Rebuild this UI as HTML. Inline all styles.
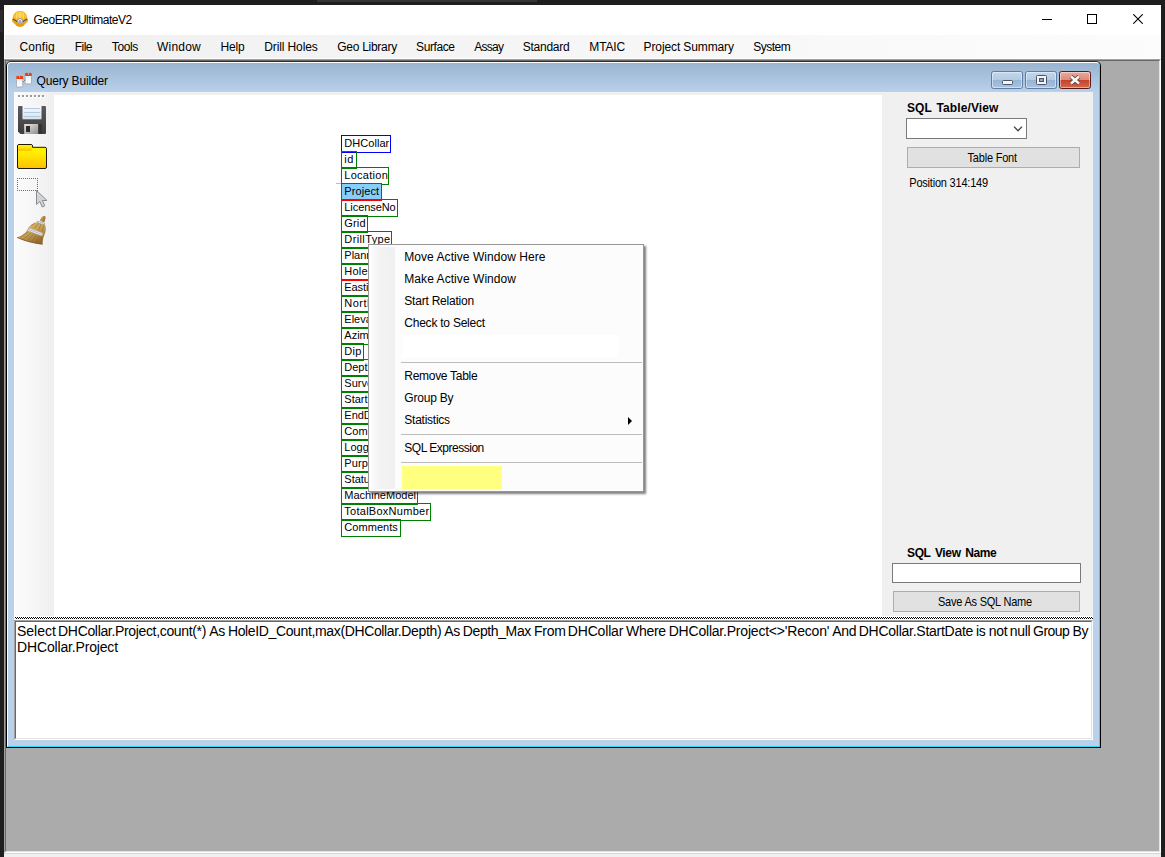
<!DOCTYPE html>
<html lang="en"><head><meta charset="utf-8"><title>GeoERPUltimateV2 - Query Builder</title>
<style>
html,body{margin:0;padding:0}
body{width:1165px;height:857px;background:#1e1e1e;position:relative;overflow:hidden;font-family:"Liberation Sans",sans-serif;font-size:12px;color:#000}
div,span,svg{position:absolute;box-sizing:border-box}
.t{white-space:nowrap;display:block}
.fb{height:18px;border:1px solid #008000}
#win{left:4px;top:5px;width:1157px;height:852px;background:#fff}
#menubar{left:4px;top:35px;width:1157px;height:24px;background:linear-gradient(90deg,#f0f0f0,#fcfcfc);border-left:1px solid #fff;border-bottom:1px solid #fff}
#mdi{left:4px;top:59px;width:1157px;height:794px;background:#ababab;border-style:solid;border-width:1px;border-color:#a0a0a0 #fff #fff #a0a0a0}
#mdi2{left:5px;top:60px;width:1155px;height:792px;border-style:solid;border-width:1px;border-color:#696969 #e3e3e3 #e3e3e3 #696969}
#status{left:4px;top:853px;width:1157px;height:4px;background:#f0f0f0;border-top:1px solid #d7d7d7}
#child{left:6px;top:61px;width:1095px;height:687px;background:#b9d1ea;border:1px solid #000;border-top-color:#2d2d2d;border-radius:5px 5px 0 0;overflow:hidden}
#chl{left:0;top:0;width:1093px;height:685px;border-style:solid;border-width:1px;border-color:#fff #2fd6f3 #2fd6f3 #fff;border-radius:4px 4px 0 0}
#cap{left:1px;top:1px;width:1091px;height:29px;background:linear-gradient(#99b4d1,#b9d1ea)}
#content{left:14px;top:92px;width:1079px;height:648px;background:#f0f0f0}
#tool{left:14px;top:92px;width:37px;height:524px;background:linear-gradient(90deg,#fcfcfc,#f0f0f0);border-radius:0 2px 0 0}
#canvas{left:54px;top:95px;width:828px;height:521px;background:#fff;overflow:hidden}
#split{left:14px;top:616px;width:1079px;height:4px;background:#fff}
#split i{position:absolute;left:1px;top:1px;width:1078px;height:2px;background:repeating-conic-gradient(#000 0% 25%,#fff 0% 50%) 1px 0/2px 2px}
#sqlbox{left:14px;top:620px;width:1079px;height:120px;background:#fff;border-style:solid;border-width:1px;border-color:#a0a0a0 #fff #fff #a0a0a0}
#sqlbox2{left:15px;top:621px;width:1077px;height:118px;border-style:solid;border-width:1px;border-color:#696969 #e3e3e3 #e3e3e3 #696969}
.btn{background:#e1e1e1;border:1px solid #adadad}
.inp{background:#fff;border:1px solid #7a7a7a}
.cb{height:18px;width:32px;top:71px;border:1px solid #5f7ea6;border-radius:2.5px;background:linear-gradient(#c3d6ec 0%,#b4cbe6 48%,#98b4d4 52%,#a9c3e0 100%);box-shadow:inset 0 0 0 1px rgba(255,255,255,.45)}
.cb.x{border-color:#5a1a16;background:linear-gradient(#eaa99b 0%,#dd8b79 48%,#c4432a 52%,#d2694e 100%)}
#ctx{left:368px;top:244px;width:276px;height:248px;background:#fcfcfc;border:1px solid #979797;box-shadow:2px 2px 2px rgba(0,0,0,.5)}
#ctx .gut{left:2px;top:2px;width:24px;height:242px;background:linear-gradient(90deg,#fbfbfb,#f3f3f3 35%,#f0f0f0)}
.sep{height:1px;background:#bdbdbd;left:401px;width:241px}

</style></head>
<body>
<div style="left:0;top:10px;width:3px;height:22px;background:#2b2b2b"></div><div style="left:317px;top:0;width:220px;height:2px;background:#353535"></div>
<div id="win"></div>
<!-- app icon: miner helmet -->
<svg style="left:12px;top:11px" width="16" height="16" viewBox="0 0 16 16">
<defs><radialGradient id="hg" cx="50%" cy="25%" r="75%"><stop offset="0" stop-color="#ffd858"/><stop offset=".55" stop-color="#fdb414"/><stop offset="1" stop-color="#f09400"/></radialGradient></defs>
<path d="M8 0C4.500 0 1.300 2.500 1.200 7 .5 7.500 0 8.500 .3 9.800c.5 1.700 2.200 2.700 3.200 3.400L5 15q3 .8 6 0l1.500-1.800c1-.7 2.700-1.700 3.200-3.400.3-1.300-.2-2.300-.9-2.800C14.700 2.500 11.500 0 8 0z" fill="url(#hg)" stroke="#e89a10" stroke-width=".5"/>
<path d="M8 .6V7M5.200 1.300Q4.300 4 4.400 7.500M10.800 1.300q.9 2.700.8 6.200" stroke="#ffe48a" stroke-width=".9" fill="none" opacity=".75"/>
<path d="M.9 8.200Q3.200 9 5.500 11M15.100 8.200Q12.800 9 10.500 11" stroke="#48587a" stroke-width="1.400" fill="none"/>
<path d="M3.500 13.200L5 15q3 .8 6 0l1.500-1.800Q8 15 3.500 13.200z" fill="#f59800"/>
<circle cx="8" cy="10.200" r="2.700" fill="#eceef2" stroke="#6c88b4" stroke-width=".7"/>
<path d="M6.600 12.200v-1.700a1.400 1.400 0 0 1 2.800 0v1.700z" fill="#a4a6ae"/>
</svg>
<!-- caption controls -->
<div style="left:1042px;top:19px;width:10px;height:1px;background:#000"></div>
<div style="left:1087px;top:14px;width:10px;height:10px;border:1px solid #000"></div>
<svg style="left:1133px;top:14px" width="10" height="10" viewBox="0 0 10 10"><path d="M.3 .3L9.700 9.700M9.700 .3L.3 9.700" stroke="#000" stroke-width="1.100" fill="none"/></svg>
<div id="menubar"></div>
<div id="mdi"></div><div id="mdi2"></div>
<div id="status"></div>
<div id="child"><div id="cap"></div><div id="chl"></div></div>
<!-- child icon -->
<svg style="left:16px;top:72px" width="16" height="16" viewBox="0 0 16 16">
<defs><linearGradient id="sh" x1="0" y1="0" x2="0" y2="1"><stop offset="0" stop-color="#e8eaea"/><stop offset="1" stop-color="#ffffff"/></linearGradient></defs>
<rect x=".4" y="4.100" width="6.400" height="10.900" rx=".8" fill="url(#sh)" stroke="#98a2ac" stroke-width=".8"/>
<path d="M.4 7.100V4.900a.8 .8 0 0 1 .8-.8h5a.8 .8 0 0 1 .8 .8v2.200z" fill="#f23c0e"/>
<rect x=".7" y="7.100" width="5.800" height=".8" fill="#d8f4f4"/>
<rect x="9.100" y="1" width="6.400" height="10.900" rx=".8" fill="url(#sh)" stroke="#98a2ac" stroke-width=".8"/>
<path d="M9.100 4V1.800a.8 .8 0 0 1 .8-.8h5a.8 .8 0 0 1 .8 .8V4z" fill="#f23c0e"/>
<rect x="9.400" y="4" width="5.800" height=".8" fill="#d8f4f4"/>
<path d="M3.500 3v2.800M12.500 0v2.800" stroke="#a4b8c4" stroke-width="1"/>
<path d="M7 9.800L8.900 7.900" stroke="#5c6c7c" stroke-width="1"/><path d="M7.200 8.200l1.200 1.200" stroke="#f0f4f8" stroke-width=".8"/>
</svg>
<!-- child caption buttons -->
<div class="cb" style="left:991px"><div style="left:10px;top:8px;width:11px;height:5px;background:#f6f6f6;border:1px solid #4a5468;border-radius:1.500px"></div></div>
<div class="cb" style="left:1025px"><div style="left:10px;top:3px;width:11px;height:10px;background:#f6f6f6;border:1px solid #4a5468;border-radius:1.500px"></div><div style="left:13px;top:6px;width:5px;height:4px;background:#8aa6ca;border:1px solid #4a5468"></div></div>
<div class="cb x" style="left:1059px"><svg style="left:8px;top:2px" width="14" height="12" viewBox="0 0 14 12"><path d="M3 2.500l8 7M11 2.500l-8 7" stroke="#4a3434" stroke-width="4.200" fill="none"/><path d="M3 2.500l8 7M11 2.500l-8 7" stroke="#f8f8f8" stroke-width="2.600" fill="none"/></svg></div>
<div id="content"></div>
<div id="tool"></div>
<!-- grip dots -->
<svg style="left:18px;top:95px" width="28" height="4" viewBox="0 0 28 4"><g fill="#fff"><rect x="1" y="1" width="2" height="2"/><rect x="5" y="1" width="2" height="2"/><rect x="9" y="1" width="2" height="2"/><rect x="13" y="1" width="2" height="2"/><rect x="17" y="1" width="2" height="2"/><rect x="21" y="1" width="2" height="2"/><rect x="25" y="1" width="2" height="2"/></g><g fill="#9a9a9a"><rect x="0" y="0" width="2" height="2"/><rect x="4" y="0" width="2" height="2"/><rect x="8" y="0" width="2" height="2"/><rect x="12" y="0" width="2" height="2"/><rect x="16" y="0" width="2" height="2"/><rect x="20" y="0" width="2" height="2"/><rect x="24" y="0" width="2" height="2"/></g></svg>
<!-- floppy -->
<svg style="left:18px;top:106px" width="28" height="28" viewBox="0 0 28 28">
<defs><linearGradient id="fl1" x1="0" y1="0" x2="0" y2="1"><stop offset="0" stop-color="#5c5a5a"/><stop offset="1" stop-color="#3e3c3c"/></linearGradient>
<linearGradient id="fl2" x1="0" y1="0" x2="0" y2="1"><stop offset="0" stop-color="#f8fbfe"/><stop offset="1" stop-color="#d4e2ee"/></linearGradient>
<linearGradient id="fl3" x1="0" y1="0" x2="1" y2="1"><stop offset="0" stop-color="#e8e8e8"/><stop offset="1" stop-color="#8e8e8e"/></linearGradient></defs>
<path d="M1 0h26a1 1 0 0 1 1 1v26a1 1 0 0 1-1 1H2.500L0 25.500V1a1 1 0 0 1 1-1z" fill="url(#fl1)"/>
<rect x="4.500" y="0" width="19" height="13.300" fill="url(#fl2)"/>
<path d="M6 2.500h16M6 6.500h16M6 10.500h16" stroke="#b4cade" stroke-width="1"/>
<rect x="6.200" y="18" width="14" height="10" fill="url(#fl3)"/>
<rect x="8" y="20" width="4" height="6" fill="#2c2a2a"/>
<rect x="20.500" y="18" width="3.500" height="10" fill="#343232"/>
</svg>
<!-- folder -->
<svg style="left:17px;top:144px" width="30" height="26" viewBox="0 0 30 26">
<defs><linearGradient id="fot" x1="0" y1="0" x2="0" y2="1"><stop offset="0" stop-color="#fff200"/><stop offset=".55" stop-color="#ffe000"/><stop offset="1" stop-color="#ffae00"/></linearGradient><linearGradient id="fo" x1="0" y1="0" x2="0" y2="1"><stop offset="0" stop-color="#fff600"/><stop offset=".35" stop-color="#ffee00"/><stop offset="1" stop-color="#ffbe00"/></linearGradient></defs>
<path d="M2 .5h12a1.500 1.500 0 0 1 1.500 1.500v1.300H28a1.500 1.500 0 0 1 1.500 1.500V23a1.500 1.500 0 0 1-1.500 1.500H2A1.500 1.500 0 0 1 .5 23V2A1.500 1.500 0 0 1 2 .5z" fill="url(#fo)" stroke="#1c1a08" stroke-width="1"/>
<rect x="1.200" y="1.200" width="13.600" height="5.400" fill="url(#fot)"/>
</svg>
<!-- select tool -->
<svg style="left:17px;top:178px" width="32" height="32" viewBox="0 0 32 32">
<path d="M0 0h1v1h-1zM0 12h1v1h-1zM2 0h1v1h-1zM2 12h1v1h-1zM4 0h1v1h-1zM4 12h1v1h-1zM6 0h1v1h-1zM6 12h1v1h-1zM8 0h1v1h-1zM8 12h1v1h-1zM10 0h1v1h-1zM10 12h1v1h-1zM12 0h1v1h-1zM12 12h1v1h-1zM14 0h1v1h-1zM14 12h1v1h-1zM16 0h1v1h-1zM16 12h1v1h-1zM18 0h1v1h-1zM18 12h1v1h-1zM20 0h1v1h-1zM20 12h1v1h-1zM0 2h1v1h-1zM20 2h1v1h-1zM0 4h1v1h-1zM20 4h1v1h-1zM0 6h1v1h-1zM20 6h1v1h-1zM0 8h1v1h-1zM20 8h1v1h-1zM0 10h1v1h-1zM20 10h1v1h-1z" fill="#6e6e6e"/>
<path d="M19.500 12.500v14l3.300-3 2.400 5.500 2.600-1.200-2.400-5.300h4.600z" fill="#d2d4d8" stroke="#8a8c90" stroke-width="1" stroke-linejoin="round"/>
</svg>
<!-- broom -->
<svg style="left:17px;top:215px" width="30" height="31" viewBox="0 0 30 31">
<defs><linearGradient id="br" x1="0" y1="0" x2=".6" y2="1"><stop offset="0" stop-color="#dcc07c"/><stop offset=".55" stop-color="#c8a258"/><stop offset="1" stop-color="#94682c"/></linearGradient></defs>
<path d="M22.800 5.500L25 2 26.500 .9 28.300 1.300 28.600 3 27.400 7.500z" fill="#a67c38"/>
<path d="M26.300 1.500l-1.800 4.700" stroke="#c8a45c" stroke-width=".9" fill="none"/>
<path d="M20 7C15 8.500 11.500 11.500 10.500 14.500 8 19 4 21 0 22.400 5 24.500 12 27.500 25.600 29.300 25.500 25 26.500 21.500 28.300 17.500 29.200 14 28.800 11 27.800 9z" fill="url(#br)"/>
<path d="M0 22.400C5 24.500 12 27.500 25.600 29.300" stroke="#6e4418" stroke-width=".9" fill="none" opacity=".8"/>
<path d="M3 22.300l8.500-5.500M6.500 24l8-6.300M10.500 25.500l6.500-6.800M14.500 26.800l5.200-7.200M18.500 28l3.800-7.600M22.300 28.800l2.200-7.800M14 10.500l4-2.500M17.500 13l4.500-5M21.500 15l3-6.500M25 16.500l1.800-6" stroke="#8e6a2e" stroke-width=".8" fill="none" opacity=".75"/>
<path d="M20.200 6.200l7.400 2-.4 1.600-6.600-1.800z" fill="#e6e6e8" stroke="#8c8e94" stroke-width=".6"/>
<path d="M12.200 13L26 18.200 24.800 21 10.800 15.800z" fill="#f0f0f2" stroke="#a4a4a8" stroke-width=".5"/>
<path d="M11.500 14.400l13.900 5.200" stroke="#a8aab0" stroke-width=".8"/>
</svg>
<div id="canvas"></div>
<div style="left:336px;top:183px;width:5px;height:1px;background:#87cefa"></div>
<div class="fb" style="left:341px;top:135px;width:50px;border-color:#0000ff;"></div>
<div class="fb" style="left:341px;top:151px;width:16px;border-color:#008000;"></div>
<div class="fb" style="left:341px;top:167px;width:48px;border-color:#008000;"></div>
<div class="fb" style="left:341px;top:183px;width:41px;border-color:#ff0000;background:#87cefa;"></div>
<div class="fb" style="left:341px;top:199px;width:57px;border-color:#008000;"></div>
<div class="fb" style="left:341px;top:215px;width:27px;border-color:#008000;"></div>
<div class="fb" style="left:341px;top:231px;width:51px;border-color:#008000;"></div>
<div class="fb" style="left:341px;top:247px;width:72px;border-color:#008000;"></div>
<div class="fb" style="left:341px;top:263px;width:40px;border-color:#ff0000;"></div>
<div class="fb" style="left:341px;top:279px;width:46px;border-color:#008000;"></div>
<div class="fb" style="left:341px;top:295px;width:52px;border-color:#008000;"></div>
<div class="fb" style="left:341px;top:311px;width:54px;border-color:#008000;"></div>
<div class="fb" style="left:341px;top:327px;width:48px;border-color:#008000;"></div>
<div class="fb" style="left:341px;top:343px;width:23px;border-color:#008000;"></div>
<div class="fb" style="left:341px;top:359px;width:37px;border-color:#008000;"></div>
<div class="fb" style="left:341px;top:375px;width:75px;border-color:#008000;"></div>
<div class="fb" style="left:341px;top:391px;width:53px;border-color:#008000;"></div>
<div class="fb" style="left:341px;top:407px;width:48px;border-color:#008000;"></div>
<div class="fb" style="left:341px;top:423px;width:52px;border-color:#008000;"></div>
<div class="fb" style="left:341px;top:439px;width:54px;border-color:#008000;"></div>
<div class="fb" style="left:341px;top:455px;width:48px;border-color:#008000;"></div>
<div class="fb" style="left:341px;top:471px;width:40px;border-color:#008000;"></div>
<div class="fb" style="left:341px;top:487px;width:77px;border-color:#008000;"></div>
<div class="fb" style="left:341px;top:503px;width:90px;border-color:#008000;"></div>
<div class="fb" style="left:341px;top:519px;width:60px;border-color:#008000;"></div>
<span class="t" id="f0" style="left:344.30px;top:137.69px;font-size:11px;line-height:1;letter-spacing:0.050px;">DHCollar</span>
<span class="t" id="f1" style="left:344.30px;top:153.69px;font-size:11px;line-height:1;letter-spacing:0.625px;">id</span>
<span class="t" id="f2" style="left:344.30px;top:169.69px;font-size:11px;line-height:1;letter-spacing:0.268px;">Location</span>
<span class="t" id="f3" style="left:344.30px;top:185.69px;font-size:11px;line-height:1;letter-spacing:0.100px;">Project</span>
<span class="t" id="f4" style="left:344.30px;top:201.69px;font-size:11px;line-height:1;letter-spacing:-0.069px;">LicenseNo</span>
<span class="t" id="f5" style="left:344.30px;top:217.69px;font-size:11px;line-height:1;letter-spacing:0.148px;">Grid</span>
<span class="t" id="f6" style="left:344.30px;top:233.69px;font-size:11px;line-height:1;letter-spacing:0.389px;">DrillType</span>
<span class="t" id="f7" style="left:344.30px;top:249.69px;font-size:11px;line-height:1;">PlannedDepth</span>
<span class="t" id="f8" style="left:344.30px;top:265.69px;font-size:11px;line-height:1;letter-spacing:0.250px;">HoleID</span>
<span class="t" id="f9" style="left:344.30px;top:281.69px;font-size:11px;line-height:1;letter-spacing:-0.100px;">Easting</span>
<span class="t" id="f10" style="left:344.30px;top:297.69px;font-size:11px;line-height:1;letter-spacing:0.500px;">Northing</span>
<span class="t" id="f11" style="left:344.30px;top:313.69px;font-size:11px;line-height:1;">Elevation</span>
<span class="t" id="f12" style="left:344.30px;top:329.69px;font-size:11px;line-height:1;">Azimuth</span>
<span class="t" id="f13" style="left:344.30px;top:345.69px;font-size:11px;line-height:1;letter-spacing:0.274px;">Dip</span>
<span class="t" id="f14" style="left:344.30px;top:361.69px;font-size:11px;line-height:1;">Depth</span>
<span class="t" id="f15" style="left:344.30px;top:377.69px;font-size:11px;line-height:1;">SurveyMethod</span>
<span class="t" id="f16" style="left:344.30px;top:393.69px;font-size:11px;line-height:1;">StartDate</span>
<span class="t" id="f17" style="left:344.30px;top:409.69px;font-size:11px;line-height:1;">EndDate</span>
<span class="t" id="f18" style="left:344.30px;top:425.69px;font-size:11px;line-height:1;letter-spacing:0.100px;">Company</span>
<span class="t" id="f19" style="left:344.30px;top:441.69px;font-size:11px;line-height:1;">LoggedBy</span>
<span class="t" id="f20" style="left:344.30px;top:457.69px;font-size:11px;line-height:1;letter-spacing:0.100px;">Purpose</span>
<span class="t" id="f21" style="left:344.30px;top:473.69px;font-size:11px;line-height:1;">Status</span>
<span class="t" id="f22" style="left:344.30px;top:489.69px;font-size:11px;line-height:1;letter-spacing:0.013px;">MachineModel</span>
<span class="t" id="f23" style="left:344.30px;top:505.69px;font-size:11px;line-height:1;letter-spacing:0.265px;">TotalBoxNumber</span>
<span class="t" id="f24" style="left:344.30px;top:521.69px;font-size:11px;line-height:1;letter-spacing:0.055px;">Comments</span>
<!-- right panel -->
<div class="inp" style="left:906px;top:118px;width:121px;height:21px"><svg style="left:106px;top:7px" width="10" height="6" viewBox="0 0 10 6"><path d="M1 .6L5 4.700 9 .6" fill="none" stroke="#404040" stroke-width="1.300"/></svg></div>
<div class="btn" style="left:907px;top:147px;width:173px;height:21px"></div>
<div class="inp" style="left:892px;top:563px;width:189px;height:20px"></div>
<div class="btn" style="left:893px;top:591px;width:187px;height:21px"></div>
<div id="split"><i></i></div>
<div id="sqlbox"></div><div id="sqlbox2"></div>
<!-- context menu -->
<div id="ctx"><div class="gut"></div></div>
<div style="left:402px;top:335px;width:216px;height:23px;background:#fff"></div>
<div class="sep" style="top:362px"></div>
<div class="sep" style="top:434px"></div>
<div class="sep" style="top:462px"></div>
<svg style="left:628px;top:417px" width="4" height="8" viewBox="0 0 4 8"><path d="M0 0l4 4-4 4z" fill="#000"/></svg>
<div style="left:402px;top:466px;width:100px;height:23px;background:#ffff80"></div>
<span class="t" id="ttl" style="left:33.50px;top:13.84px;font-size:12px;line-height:1;letter-spacing:-0.487px;">GeoERPUltimateV2</span>
<span class="t" id="m0" style="left:19.60px;top:40.84px;font-size:12px;line-height:1;letter-spacing:0.057px;">Config</span>
<span class="t" id="m1" style="left:74.70px;top:40.84px;font-size:12px;line-height:1;letter-spacing:-0.527px;">File</span>
<span class="t" id="m2" style="left:111.80px;top:40.84px;font-size:12px;line-height:1;letter-spacing:-0.403px;">Tools</span>
<span class="t" id="m3" style="left:157.00px;top:40.84px;font-size:12px;line-height:1;letter-spacing:0.220px;">Window</span>
<span class="t" id="m4" style="left:220.40px;top:40.84px;font-size:12px;line-height:1;letter-spacing:-0.139px;">Help</span>
<span class="t" id="m5" style="left:264.20px;top:40.84px;font-size:12px;line-height:1;letter-spacing:-0.104px;">Drill Holes</span>
<span class="t" id="m6" style="left:337.30px;top:40.84px;font-size:12px;line-height:1;letter-spacing:-0.286px;">Geo Library</span>
<span class="t" id="m7" style="left:416.10px;top:40.84px;font-size:12px;line-height:1;letter-spacing:-0.409px;">Surface</span>
<span class="t" id="m8" style="left:474.30px;top:40.84px;font-size:12px;line-height:1;letter-spacing:-0.731px;">Assay</span>
<span class="t" id="m9" style="left:522.70px;top:40.84px;font-size:12px;line-height:1;letter-spacing:-0.240px;">Standard</span>
<span class="t" id="m10" style="left:589.30px;top:40.84px;font-size:12px;line-height:1;letter-spacing:-0.123px;">MTAIC</span>
<span class="t" id="m11" style="left:643.60px;top:40.84px;font-size:12px;line-height:1;letter-spacing:-0.119px;">Project Summary</span>
<span class="t" id="m12" style="left:753.20px;top:40.84px;font-size:12px;line-height:1;letter-spacing:-0.476px;">System</span>
<span class="t" id="ct" style="left:36.50px;top:75.14px;font-size:12px;line-height:1;letter-spacing:-0.150px;">Query Builder</span>
<span class="t" id="l1" style="left:907.00px;top:101.84px;font-size:12px;line-height:1;font-weight:bold;letter-spacing:0.111px;word-spacing:1.2px;">SQL Table/View</span>
<span class="t" id="b1" style="left:967.50px;top:152.69px;font-size:11px;line-height:1;letter-spacing:-0.197px;transform:scaleY(1.12);transform-origin:0 84.65%;">Table Font</span>
<span class="t" id="pos" style="left:909.30px;top:177.69px;font-size:11px;line-height:1;letter-spacing:-0.210px;transform:scaleY(1.12);transform-origin:0 84.65%;">Position 314:149</span>
<span class="t" id="l2" style="left:907.00px;top:546.84px;font-size:12px;line-height:1;font-weight:bold;letter-spacing:-0.363px;word-spacing:1.6px;">SQL View Name</span>
<span class="t" id="b2" style="left:938.00px;top:596.69px;font-size:11px;line-height:1;letter-spacing:-0.221px;transform:scaleY(1.12);transform-origin:0 84.65%;">Save As SQL Name</span>
<span class="t" id="c0" style="left:404.30px;top:250.84px;font-size:12px;line-height:1;letter-spacing:0.051px;">Move Active Window Here</span>
<span class="t" id="c1" style="left:404.30px;top:272.84px;font-size:12px;line-height:1;letter-spacing:0.056px;">Make Active Window</span>
<span class="t" id="c2" style="left:404.30px;top:294.84px;font-size:12px;line-height:1;letter-spacing:-0.222px;">Start Relation</span>
<span class="t" id="c3" style="left:404.30px;top:316.84px;font-size:12px;line-height:1;letter-spacing:-0.231px;">Check to Select</span>
<span class="t" id="c4" style="left:404.30px;top:369.84px;font-size:12px;line-height:1;letter-spacing:-0.287px;">Remove Table</span>
<span class="t" id="c5" style="left:404.30px;top:391.84px;font-size:12px;line-height:1;letter-spacing:-0.200px;">Group By</span>
<span class="t" id="c6" style="left:404.30px;top:413.84px;font-size:12px;line-height:1;letter-spacing:-0.244px;">Statistics</span>
<span class="t" id="c7" style="left:404.30px;top:441.84px;font-size:12px;line-height:1;letter-spacing:-0.486px;">SQL Expression</span>
<div id="s1" style="left:0;top:0"><span class="t" id="s1w0" style="left:17.00px;top:623.55px;font-size:14px;line-height:1;letter-spacing:-0.004px;">Select</span> <span class="t" id="s1w1" style="left:58.10px;top:623.55px;font-size:14px;line-height:1;letter-spacing:-0.338px;">DHCollar.Project,count(*)</span> <span class="t" id="s1w2" style="left:209.30px;top:623.55px;font-size:14px;line-height:1;letter-spacing:-0.300px;">As</span> <span class="t" id="s1w3" style="left:227.90px;top:623.55px;font-size:14px;line-height:1;letter-spacing:-0.361px;">HoleID_Count,max(DHCollar.Depth)</span> <span class="t" id="s1w4" style="left:444.20px;top:623.55px;font-size:14px;line-height:1;letter-spacing:-0.300px;">As</span> <span class="t" id="s1w5" style="left:462.80px;top:623.55px;font-size:14px;line-height:1;letter-spacing:-0.387px;">Depth_Max</span> <span class="t" id="s1w6" style="left:534.10px;top:623.55px;font-size:14px;line-height:1;letter-spacing:-0.300px;">From</span> <span class="t" id="s1w7" style="left:567.80px;top:623.55px;font-size:14px;line-height:1;letter-spacing:-0.173px;">DHCollar</span> <span class="t" id="s1w8" style="left:626.10px;top:623.55px;font-size:14px;line-height:1;letter-spacing:-0.319px;">Where</span> <span class="t" id="s1w9" style="left:668.70px;top:623.55px;font-size:14px;line-height:1;letter-spacing:-0.206px;">DHCollar.Project&lt;&gt;'Recon'</span> <span class="t" id="s1w10" style="left:832.30px;top:623.55px;font-size:14px;line-height:1;letter-spacing:-0.300px;">And</span> <span class="t" id="s1w11" style="left:858.70px;top:623.55px;font-size:14px;line-height:1;letter-spacing:-0.254px;">DHCollar.StartDate</span> <span class="t" id="s1w12" style="left:975.90px;top:623.55px;font-size:14px;line-height:1;letter-spacing:-0.300px;">is</span> <span class="t" id="s1w13" style="left:988.80px;top:623.55px;font-size:14px;line-height:1;letter-spacing:-0.300px;">not</span> <span class="t" id="s1w14" style="left:1009.80px;top:623.55px;font-size:14px;line-height:1;letter-spacing:-0.300px;">null</span> <span class="t" id="s1w15" style="left:1033.10px;top:623.55px;font-size:14px;line-height:1;letter-spacing:-0.583px;">Group</span> <span class="t" id="s1w16" style="left:1072.50px;top:623.55px;font-size:14px;line-height:1;letter-spacing:-0.300px;">By</span></div>
<span class="t" id="s2" style="left:17.10px;top:639.55px;font-size:14px;line-height:1;letter-spacing:-0.167px;">DHCollar.Project</span>

</body></html>
